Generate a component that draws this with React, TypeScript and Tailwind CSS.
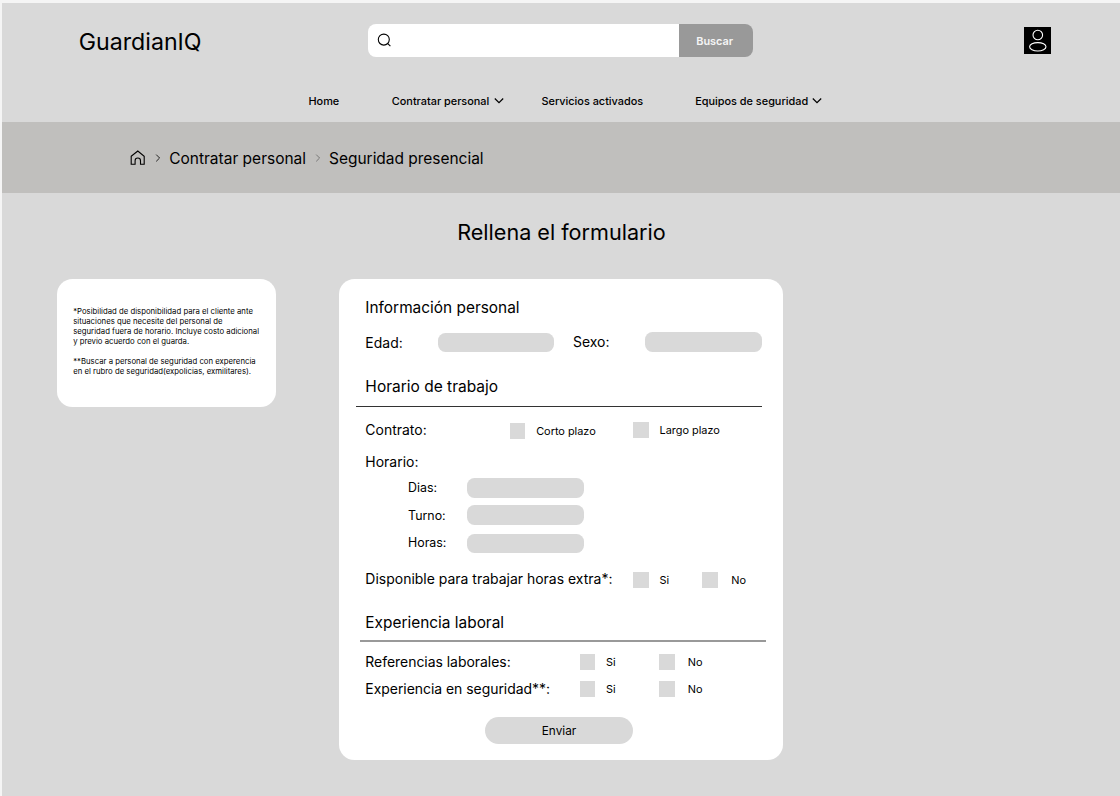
import React from "react";

type Props = { className?: string; children?: React.ReactNode };

const Row = ({ className = "", children }: Props) => (
  <div className={`flex items-center whitespace-nowrap ${className}`}>{children}</div>
);

const Field = ({ className = "" }: Props) => (
  <div className={`h-[19.5px] w-[116.7px] shrink-0 rounded-[7.5px] bg-[#d9d9d9] ${className}`} />
);

const Box = ({ className = "" }: Props) => (
  <div className={`h-[15.6px] w-[15.6px] shrink-0 bg-[#d9d9d9] ${className}`} />
);

const Small = ({ className = "", children }: Props) => (
  <span className={`shrink-0 text-[10.9px] leading-[14px] ${className}`}>{children}</span>
);

const Label = ({ className = "", children }: Props) => (
  <span className={`shrink-0 text-[13.97px] leading-[18px] ${className}`}>{children}</span>
);

const ChevronDown = ({ className = "" }: Props) => (
  <svg className={`h-[10px] w-[10px] shrink-0 ${className}`} viewBox="0 0 10 10" fill="none">
    <path d="M.8 2.5L5 6.6l4.2-4.1" stroke="#000" strokeWidth="1.25" />
  </svg>
);

const ChevronRight = ({ className = "" }: Props) => (
  <svg className={`h-[8px] w-[6px] shrink-0 ${className}`} viewBox="0 0 6 8" fill="none">
    <path d="M1.2 .6L4.6 4 1.2 7.4" stroke="currentColor" strokeWidth="1" />
  </svg>
);

export default function App() {
  return (
    <div className="h-[796px] w-[1120px] overflow-hidden bg-[#f5f5f5] pt-[2.7px] pl-[1.7px] font-['Inter',sans-serif] text-black antialiased">
      <div className="h-[794px] bg-[#d9d9d9]">
        <header className="h-[119.6px] pt-[21px]">
          <Row className="h-[33.3px]">
            <div className="ml-[77px] w-[289.7px] pt-[3px] text-[23.2px] leading-[28px]">GuardianIQ</div>
            <div className="flex h-[33.3px] w-[311px] items-center rounded-l-[8px] bg-white pl-[8.3px]">
              <svg className="h-[15px] w-[15px]" viewBox="0 0 15 15" fill="none" stroke="#000" strokeWidth="1.1">
                <circle cx="6.8" cy="6.6" r="5.5" />
                <path d="M10.8 10.6l2.6 2.6" />
              </svg>
            </div>
            <button className="h-[33.3px] w-[73.6px] rounded-r-[8px] bg-[#999] pt-[1px] pr-[3px] text-[10.9px] font-semibold text-[#f5f5f5]">
              Buscar
            </button>
            <svg className="ml-[271px] h-[27.5px] w-[27.5px]" viewBox="0 0 27.5 27.5" fill="none">
              <path d="M0 0h27.5v27.5H0z" fill="#000" />
              <ellipse cx="13.8" cy="8" rx="4.8" ry="4.8" stroke="#fff" strokeWidth="1.1" />
              <ellipse cx="13.8" cy="19.8" rx="8.2" ry="4.2" stroke="#fff" strokeWidth="1.1" />
            </svg>
          </Row>
          <nav className="mt-[37px] flex h-[14px] items-center whitespace-nowrap text-[10.9px] leading-[14px] font-medium">
            <span className="ml-[306.8px] w-[83.3px]">Home</span>
            <span className="w-[102.2px]">Contratar personal</span>
            <ChevronDown className="mr-[37.5px]" />
            <span className="w-[153.7px]">Servicios activados</span>
            <span className="w-[117.2px]">Equipos de seguridad</span>
            <ChevronDown />
          </nav>
        </header>

        <Row className="h-[70.7px] bg-[#c0bfbd] text-[15.5px] leading-[20px]">
          <svg className="ml-[128.5px] h-[16px] w-[16px]" viewBox="0 0 16 16" fill="none" stroke="#000" strokeWidth="1.1">
            <path d="M1.2 6.3L7.8 1l6.4 5.3v8h-3.7v-3.6a2.7 2.7 0 0 0-5.4 0v3.6H1.2z" />
          </svg>
          <ChevronRight className="mr-[8px] ml-[9px] text-[#222]" />
          <span className="w-[146.2px] pt-[2.6px]">Contratar personal</span>
          <ChevronRight className="mr-[7.7px] text-[#777]" />
          <span className="pt-[2.6px] tracking-[-0.03px]">Seguridad presencial</span>
        </Row>

        <main>
          <h1 className="ml-[455.5px] pt-[25px] text-[21.6px] leading-[28px]">Rellena el formulario</h1>
          <div className="mt-[33.3px] ml-[55.3px] flex items-start gap-[63.2px]">
            <aside className="h-[127.5px] w-[219px] rounded-[15.5px] bg-white pt-[26.3px] pl-[16.2px] text-[7.75px] leading-[10.1px] whitespace-nowrap">
              <p>
                *Posibilidad de disponibilidad para el cliente ante
                <br />
                situaciones que necesite del personal de
                <br />
                seguridad fuera de horario. Incluye costo adicional
                <br />y previo acuerdo con el guarda.
              </p>
              <p className="mt-[10px]">
                **Buscar a personal de seguridad con experencia
                <br />
                en el rubro de seguridad(expolicias, exmilitares).
              </p>
            </aside>

            <form className="h-[480.7px] w-[444.2px] rounded-[15.5px] bg-white pt-[15px] pl-[26.2px]">
              <h2 className="h-[27px] text-[15.42px] leading-[27px]">Información personal</h2>
              <Row className="mt-[7.7px] h-[27px]">
                <Label className="w-[72.2px] pt-[1px]">Edad:</Label>
                <Field />
                <Label className="ml-[18.7px] w-[72.2px]">Sexo:</Label>
                <Field className="mb-[1.4px]" />
              </Row>
              <h2 className="mt-[17px] h-[27px] text-[15.5px] leading-[27px]">Horario de trabajo</h2>
              <hr className="mt-[6.3px] -ml-[9.2px] h-[1px] w-[405.6px] border-0 bg-[#333]" />
              <Row className="mt-[13px] h-[20px]">
                <Label className="w-[144.4px]">Contrato:</Label>
                <Box className="mt-[2px]" />
                <Small className="mt-[2px] ml-[10.8px] w-[97px]">Corto plazo</Small>
                <Box />
                <Small className="ml-[10.8px]">Largo plazo</Small>
              </Row>
              <Row className="mt-[11.5px] h-[20px]">
                <Label>Horario:</Label>
              </Row>
              <Row className="mt-[6.3px] ml-[42.7px] h-[20px] text-[12.4px]">
                <span className="w-[58.8px]">Dias:</span>
                <Field />
              </Row>
              <Row className="mt-[7.2px] ml-[42.7px] h-[20px] text-[12.4px]">
                <span className="w-[58.8px] pt-[2px]">Turno:</span>
                <Field />
              </Row>
              <Row className="mt-[8.2px] ml-[42.7px] h-[20px] text-[12.4px]">
                <span className="mb-[1px] w-[58.8px]">Horas:</span>
                <Field />
              </Row>
              <Row className="mt-[16.3px] h-[20px]">
                <Label className="w-[267.8px] pb-[1.5px]">Disponible para trabajar horas extra*:</Label>
                <Box />
                <Small className="ml-[10.8px] w-[42.8px]">Si</Small>
                <Box />
                <Small className="ml-[13.3px]">No</Small>
              </Row>
              <h2 className="mt-[19.5px] h-[27px] text-[15.42px] leading-[27px]">Experiencia laboral</h2>
              <hr className="mt-[4px] -ml-[5.2px] h-[2px] w-[405.5px] border-0 bg-[#999]" />
              <Row className="mt-[10px] h-[20px]">
                <Label className="w-[214.2px] pb-[1px] tracking-[-0.03px]">Referencias laborales:</Label>
                <Box />
                <Small className="ml-[10.8px] w-[53px]">Si</Small>
                <Box />
                <Small className="ml-[13.3px]">No</Small>
              </Row>
              <Row className="mt-[6.7px] h-[20px]">
                <Label className="w-[214.2px] tracking-[-0.04px]">Experiencia en seguridad**:</Label>
                <Box />
                <Small className="ml-[10.8px] w-[53px]">Si</Small>
                <Box />
                <Small className="ml-[13.3px]">No</Small>
              </Row>
              <button
                type="button"
                className="mt-[17.6px] ml-[119.8px] block h-[27px] w-[147.7px] rounded-full bg-[#d9d9d9] pt-[1px] text-[11.8px] leading-[26px]"
              >
                Enviar
              </button>
            </form>
          </div>
        </main>
      </div>
    </div>
  );
}
